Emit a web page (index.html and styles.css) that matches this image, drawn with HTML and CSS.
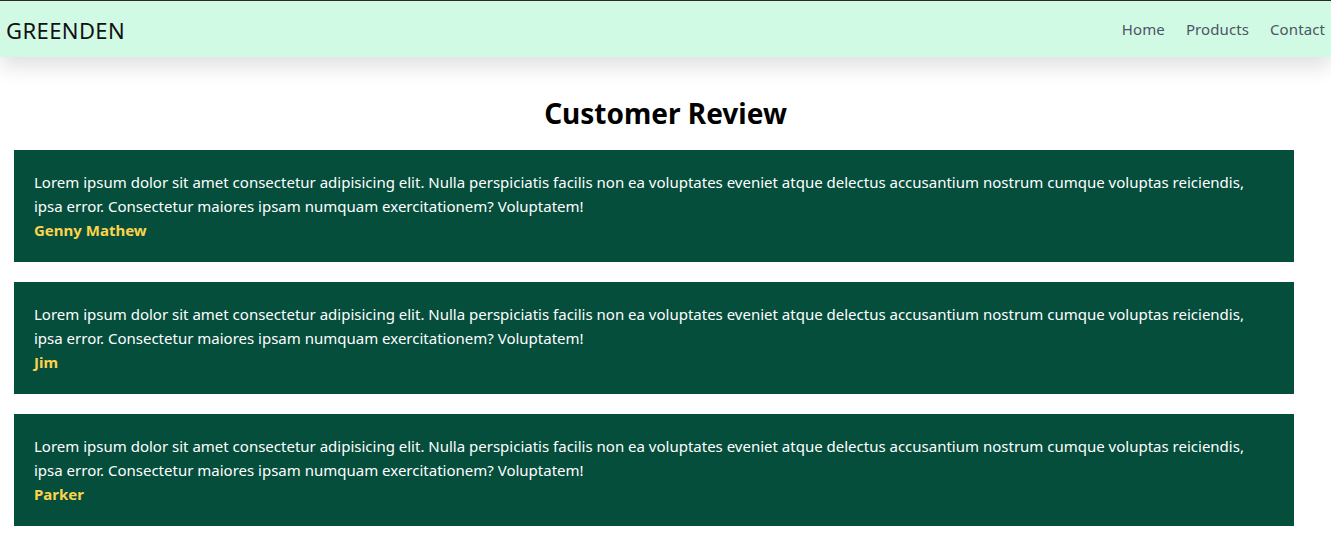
FILE: index.html
```html
<!DOCTYPE html>
<html lang="en">
<head>
<meta charset="utf-8">
<title>Greenden - Customer Review</title>
<link rel="stylesheet" href="styles.css">
</head>
<body>
<header class="navbar">
  <div class="brand">GREENDEN</div>
  <nav class="links">
    <a href="#">Home</a>
    <a href="#">Products</a>
    <a href="#">Contact</a>
  </nav>
</header>
<main class="reviews">
  <h1 class="title">Customer Review</h1>
  <div class="card">
    <p>Lorem ipsum dolor sit amet consectetur adipisicing elit. Nulla perspiciatis facilis non ea voluptates eveniet atque delectus accusantium nostrum cumque voluptas reiciendis, ipsa error. Consectetur maiores ipsam numquam exercitationem? Voluptatem!</p>
    <div class="name">Genny Mathew</div>
  </div>
  <div class="card">
    <p>Lorem ipsum dolor sit amet consectetur adipisicing elit. Nulla perspiciatis facilis non ea voluptates eveniet atque delectus accusantium nostrum cumque voluptas reiciendis, ipsa error. Consectetur maiores ipsam numquam exercitationem? Voluptatem!</p>
    <div class="name">Jim</div>
  </div>
  <div class="card">
    <p>Lorem ipsum dolor sit amet consectetur adipisicing elit. Nulla perspiciatis facilis non ea voluptates eveniet atque delectus accusantium nostrum cumque voluptas reiciendis, ipsa error. Consectetur maiores ipsam numquam exercitationem? Voluptatem!</p>
    <div class="name">Parker</div>
  </div>
</main>
</body>
</html>
```
FILE: styles.css
```css
* { box-sizing: border-box; }
body {
  margin: 0;
  font-family: "Noto Sans", "Open Sans", sans-serif;
  background: #ffffff;
  color: #000;
}
.navbar {
  height: 57px;
  border-top: 1px solid #2b2b2b;
  background: #d1fae5;
  display: flex;
  align-items: center;
  justify-content: space-between;
  padding: 0 6px 0 6px;
  box-shadow: 0 10px 20px rgba(0, 0, 0, 0.12);
  position: relative;
}
.brand {
  font-size: 22px;
  color: #111;
  letter-spacing: 0.4px;
  padding-top: 2px;
}
.links {
  display: flex;
  gap: 21px;
}
.links a {
  color: #4b5563;
  text-decoration: none;
  font-size: 15px;
  letter-spacing: 0.1px;
}
.reviews {
  padding: 0 0 20px 14px;
}
.title {
  margin: 39px 0 20px -14px;
  text-align: center;
  font-size: 28px;
  line-height: 34px;
  font-weight: 700;
}
.card {
  width: 1280px;
  background: #054e3c;
  color: #ffffff;
  padding: 20px;
  margin-bottom: 20px;
  font-size: 15px;
  line-height: 24px;
}
.card p { margin: 0; }
.name {
  color: #fcd34d;
  font-weight: 700;
}
```
